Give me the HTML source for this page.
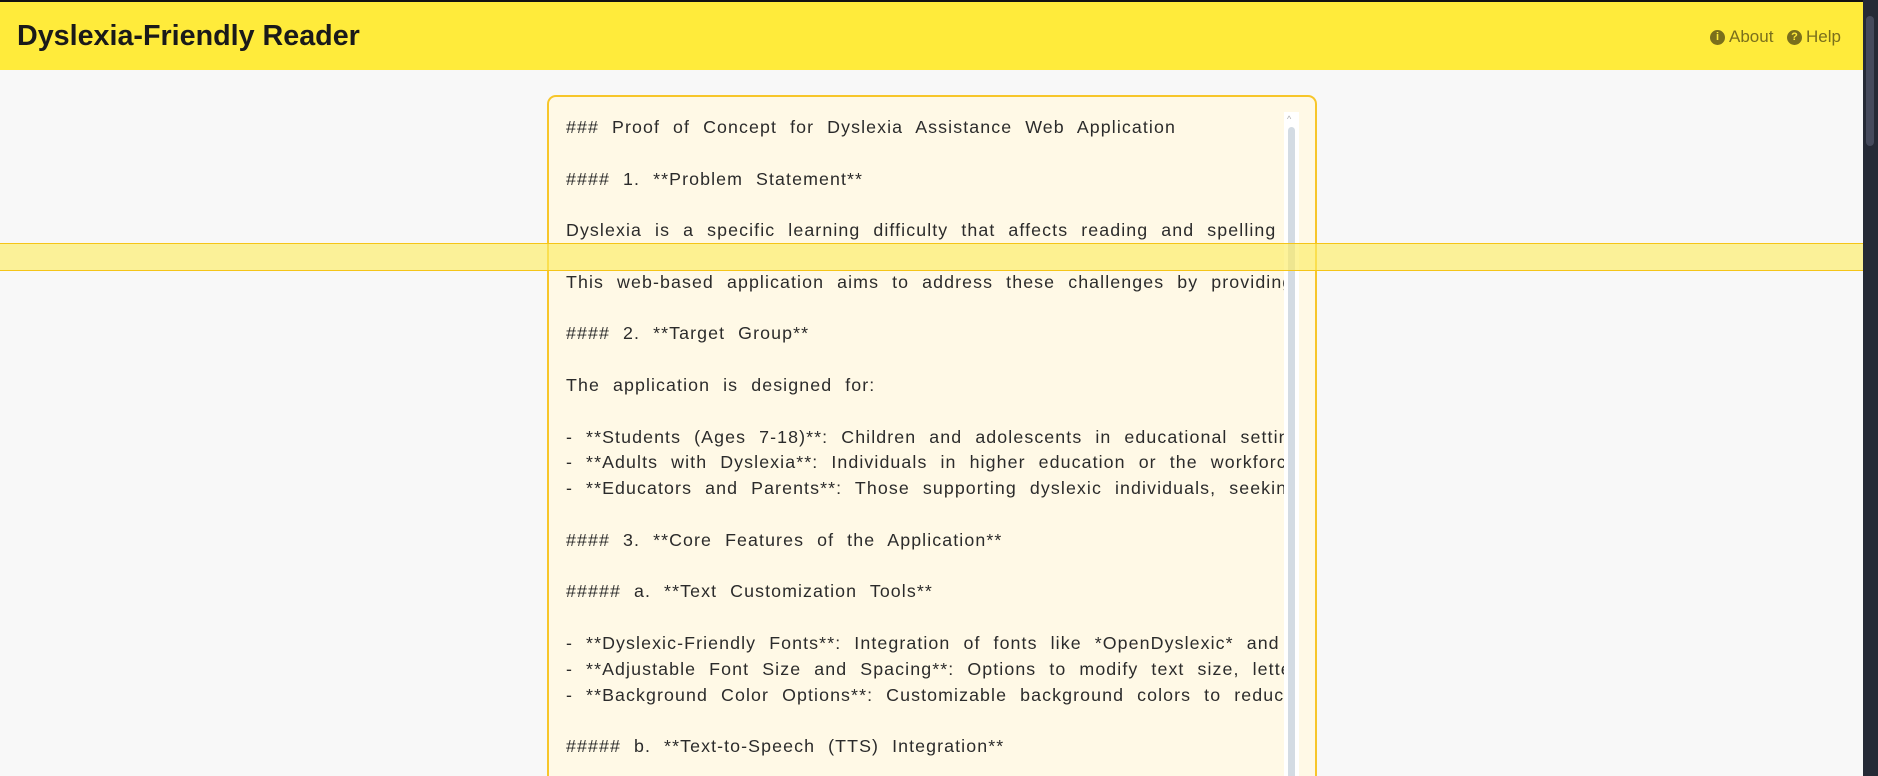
<!DOCTYPE html>
<html><head><meta charset="utf-8">
<style>
html,body{margin:0;padding:0;width:1878px;height:776px;overflow:hidden;background:#f8f8f8;font-family:"Liberation Sans",sans-serif;position:relative;}
.hdr{position:absolute;left:0;top:0;width:1863px;height:70px;background:#ffeb3b;border-top:2px solid #111;box-sizing:border-box;}
.hdr h1{position:absolute;left:17px;top:18px;margin:0;font-size:28.7px;font-weight:bold;color:#1a1a1a;}
.nav{position:absolute;top:25px;font-size:17px;color:#7a6f1c;display:flex;align-items:center;}
.ic{display:inline-block;width:15px;height:15px;border-radius:50%;background:#7a6f1c;color:#ffeb3b;font-size:11px;font-weight:bold;text-align:center;line-height:15px;margin-right:4px;}
.sb{position:absolute;left:1863px;top:0;width:15px;height:776px;background:#252a36;}
.sb i{position:absolute;left:3px;top:16px;width:8px;height:130px;border-radius:4px;background:#454a5c;}
.band{position:absolute;left:0;top:243px;width:1863px;height:28px;background:rgba(252,236,100,0.65);border-top:1px solid #f5c518;border-bottom:1px solid #f5c518;box-sizing:border-box;z-index:5;}
.panel{position:absolute;left:547px;top:95px;width:770px;height:681px;background:#fff9e6;border:2px solid #f7c62a;border-bottom:none;border-radius:9px 9px 0 0;box-sizing:border-box;overflow:hidden;}
.txt{position:absolute;left:17px;top:18px;width:718px;height:660px;overflow:hidden;white-space:pre;font-size:17.8px;line-height:25.8px;letter-spacing:1.1px;word-spacing:7px;color:#2b2b2b;}
.tr{position:absolute;left:735px;top:15px;width:15px;height:664px;background:#fff;}
.tr i{position:absolute;left:4px;top:15px;width:7px;height:649px;border-radius:4px 4px 0 0;background:#d3dbe3;}
.tr b{position:absolute;left:3px;top:2px;font-size:9px;color:#aaa;font-weight:normal;}
</style></head><body>
<div class="hdr"><h1>Dyslexia-Friendly Reader</h1>
<div class="nav" style="left:1710px"><span class="ic">i</span>About</div>
<div class="nav" style="left:1787px"><span class="ic">?</span>Help</div>
</div>
<div class="panel">
<div class="txt">### Proof of Concept for Dyslexia Assistance Web Application

#### 1. **Problem Statement**

Dyslexia is a specific learning difficulty that affects reading and spelling skills.

This web-based application aims to address these challenges by providing tools.

#### 2. **Target Group**

The application is designed for:

- **Students (Ages 7-18)**: Children and adolescents in educational settings
- **Adults with Dyslexia**: Individuals in higher education or the workforce
- **Educators and Parents**: Those supporting dyslexic individuals, seeking tools

#### 3. **Core Features of the Application**

##### a. **Text Customization Tools**

- **Dyslexic-Friendly Fonts**: Integration of fonts like *OpenDyslexic* and more
- **Adjustable Font Size and Spacing**: Options to modify text size, letter spacing
- **Background Color Options**: Customizable background colors to reduce strain

##### b. **Text-to-Speech (TTS) Integration**

</div>
<div class="tr"><b>^</b><i></i></div>
</div>
<div class="band"></div>
<div class="sb"><i></i></div>
</body></html>
